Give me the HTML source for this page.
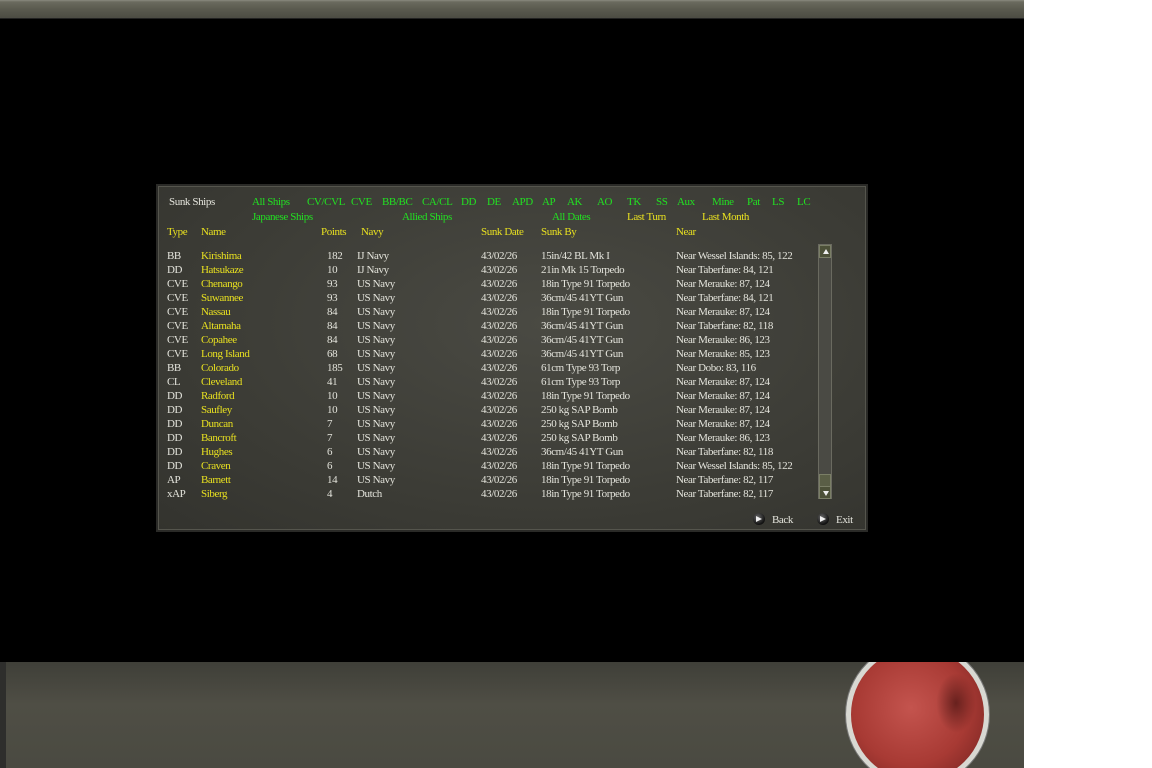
<!DOCTYPE html>
<html><head><meta charset="utf-8"><style>
*{margin:0;padding:0;box-sizing:border-box}
html,body{width:1152px;height:768px;overflow:hidden}
body{background:#fff;position:relative;font-family:"Liberation Serif",serif;font-size:11px;letter-spacing:-0.4px}
#main{position:absolute;left:0;top:0;width:1024px;height:768px;background:#000}
#top{position:absolute;left:0;top:0;width:1024px;height:19px;background:linear-gradient(#8a8a80 0,#6a6a5e 2px,#5a5a4f 50%,#4c4c43 100%);border-bottom:1px solid #222}
#bot{position:absolute;left:0;top:662px;width:1024px;height:106px;background:linear-gradient(#3f3f38,#4f4e45 40%,#4a4a41);border-left:6px solid #2e2e2c;overflow:hidden}
#disc{position:absolute;left:840px;top:-19px;width:143px;height:143px;border-radius:50%;background:radial-gradient(circle at 45% 45%,#c4544e,#a83a34 55%,#7a2522 90%);border:5px solid #d8d8d2;box-shadow:0 0 0 1px #777}
#disc:after{content:"";position:absolute;right:8px;top:25px;width:40px;height:60px;border-radius:50%;background:radial-gradient(#4a1412,transparent 70%);opacity:.7}
#panel{position:absolute;left:156px;top:184px;width:712px;height:348px;background:radial-gradient(ellipse at 55% 40%,#4a4a43,#3a3a34 70%,#33332e);border:2px solid #2a2a27;box-shadow:inset 0 0 0 1px #55554d}
.t{position:absolute;white-space:nowrap;line-height:13px}
.g{color:#22e022}.y{color:#e8e020}.w{color:#e4e4dc}
#sb{position:absolute;left:818px;top:244px;width:14px;height:255px;background:#4a4a44;border:1px solid #6a6a60}
.btn{position:absolute;left:0;width:12px;height:13px;background:#4c5038;border:1px solid #7a7e66}
.ico{position:absolute;width:12px;height:12px;border-radius:50%;background:radial-gradient(circle at 40% 35%,#666,#111 70%)}
.ico:after{content:"";position:absolute;left:3px;top:3px;border-left:6px solid #eee;border-top:3px solid transparent;border-bottom:3px solid transparent}
</style></head><body>
<div id="main"></div><div id="top"></div><div id="bot"><div id="disc"></div></div>
<div id="panel"></div>
<div class="t w" style="left:169px;top:196px">Sunk Ships</div>
<div class="t g" style="left:252px;top:196px">All Ships</div>
<div class="t g" style="left:307px;top:196px">CV/CVL</div>
<div class="t g" style="left:351px;top:196px">CVE</div>
<div class="t g" style="left:382px;top:196px">BB/BC</div>
<div class="t g" style="left:422px;top:196px">CA/CL</div>
<div class="t g" style="left:461px;top:196px">DD</div>
<div class="t g" style="left:487px;top:196px">DE</div>
<div class="t g" style="left:512px;top:196px">APD</div>
<div class="t g" style="left:542px;top:196px">AP</div>
<div class="t g" style="left:567px;top:196px">AK</div>
<div class="t g" style="left:597px;top:196px">AO</div>
<div class="t g" style="left:627px;top:196px">TK</div>
<div class="t g" style="left:656px;top:196px">SS</div>
<div class="t g" style="left:677px;top:196px">Aux</div>
<div class="t g" style="left:712px;top:196px">Mine</div>
<div class="t g" style="left:747px;top:196px">Pat</div>
<div class="t g" style="left:772px;top:196px">LS</div>
<div class="t g" style="left:797px;top:196px">LC</div>
<div class="t g" style="left:252px;top:211px">Japanese Ships</div>
<div class="t g" style="left:402px;top:211px">Allied Ships</div>
<div class="t g" style="left:552px;top:211px">All Dates</div>
<div class="t y" style="left:627px;top:211px">Last Turn</div>
<div class="t y" style="left:702px;top:211px">Last Month</div>
<div class="t y" style="left:167px;top:226px">Type</div>
<div class="t y" style="left:201px;top:226px">Name</div>
<div class="t y" style="left:321px;top:226px">Points</div>
<div class="t y" style="left:361px;top:226px">Navy</div>
<div class="t y" style="left:481px;top:226px">Sunk Date</div>
<div class="t y" style="left:541px;top:226px">Sunk By</div>
<div class="t y" style="left:676px;top:226px">Near</div>
<div id="rows"></div>
<div id="sb"><div class="btn" style="top:0"><div style="position:absolute;left:3px;top:3px;border-bottom:5px solid #eee;border-left:3px solid transparent;border-right:3px solid transparent"></div></div>
<div class="btn" style="top:229px;background:#5a5e46"></div>
<div class="btn" style="top:241px"><div style="position:absolute;left:3px;top:4px;border-top:5px solid #eee;border-left:3px solid transparent;border-right:3px solid transparent"></div></div></div>
<div class="ico" style="left:753px;top:513px"></div><div class="t w" style="left:772px;top:514px">Back</div>
<div class="ico" style="left:817px;top:513px"></div><div class="t w" style="left:836px;top:514px">Exit</div>
<script>
var d=[["BB","Kirishima","182","IJ Navy","15in/42 BL Mk I","Near Wessel Islands: 85, 122"],
["DD","Hatsukaze","10","IJ Navy","21in Mk 15 Torpedo","Near Taberfane: 84, 121"],
["CVE","Chenango","93","US Navy","18in Type 91 Torpedo","Near Merauke: 87, 124"],
["CVE","Suwannee","93","US Navy","36cm/45 41YT Gun","Near Taberfane: 84, 121"],
["CVE","Nassau","84","US Navy","18in Type 91 Torpedo","Near Merauke: 87, 124"],
["CVE","Altamaha","84","US Navy","36cm/45 41YT Gun","Near Taberfane: 82, 118"],
["CVE","Copahee","84","US Navy","36cm/45 41YT Gun","Near Merauke: 86, 123"],
["CVE","Long Island","68","US Navy","36cm/45 41YT Gun","Near Merauke: 85, 123"],
["BB","Colorado","185","US Navy","61cm Type 93 Torp","Near Dobo: 83, 116"],
["CL","Cleveland","41","US Navy","61cm Type 93 Torp","Near Merauke: 87, 124"],
["DD","Radford","10","US Navy","18in Type 91 Torpedo","Near Merauke: 87, 124"],
["DD","Saufley","10","US Navy","250 kg SAP Bomb","Near Merauke: 87, 124"],
["DD","Duncan","7","US Navy","250 kg SAP Bomb","Near Merauke: 87, 124"],
["DD","Bancroft","7","US Navy","250 kg SAP Bomb","Near Merauke: 86, 123"],
["DD","Hughes","6","US Navy","36cm/45 41YT Gun","Near Taberfane: 82, 118"],
["DD","Craven","6","US Navy","18in Type 91 Torpedo","Near Wessel Islands: 85, 122"],
["AP","Barnett","14","US Navy","18in Type 91 Torpedo","Near Taberfane: 82, 117"],
["xAP","Siberg","4","Dutch","18in Type 91 Torpedo","Near Taberfane: 82, 117"]];
var h="";d.forEach(function(r,i){var y=250+i*14;
h+='<div class="t w" style="left:167px;top:'+y+'px">'+r[0]+'</div><div class="t y" style="left:201px;top:'+y+'px">'+r[1]+'</div><div class="t w" style="left:327px;top:'+y+'px">'+r[2]+'</div><div class="t w" style="left:357px;top:'+y+'px">'+r[3]+'</div><div class="t w" style="left:481px;top:'+y+'px">43/02/26</div><div class="t w" style="left:541px;top:'+y+'px">'+r[4]+'</div><div class="t w" style="left:676px;top:'+y+'px">'+r[5]+'</div>';});
document.getElementById("rows").outerHTML=h;
</script>
</body></html>
